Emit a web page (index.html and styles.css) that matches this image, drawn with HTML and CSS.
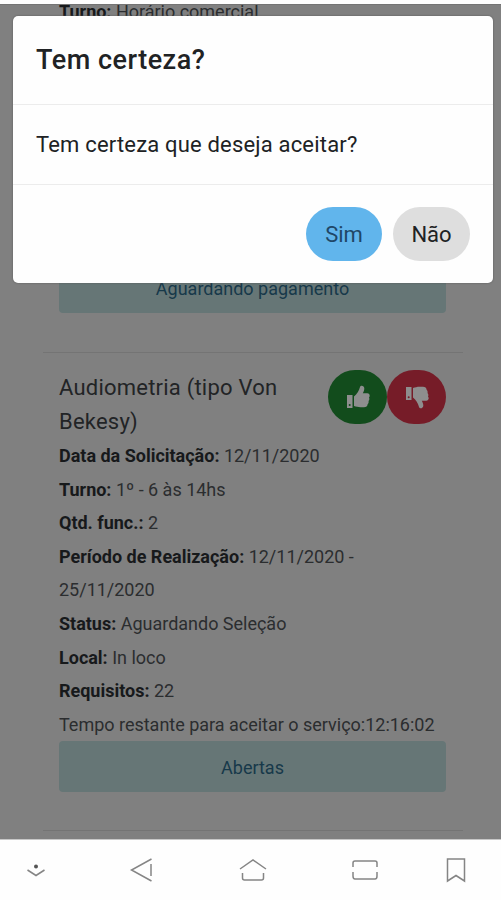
FILE: index.html
```html
<!DOCTYPE html>
<html lang="pt-BR">
<head>
<meta charset="utf-8">
<meta name="viewport" content="width=device-width, initial-scale=1">
<title>Solicitações</title>
<link rel="stylesheet" href="styles.css">
</head>
<body>
<div class="screen">
  <main class="page">
    <section class="request previous">
      <p><b>Turno:</b> <span>Horário comercial</span></p>
      <div class="alert">Aguardando pagamento</div>
    </section>
    <section class="request">
      <header class="request-head">
        <h2>Audiometria (tipo Von Bekesy)</h2>
        <div class="votes">
          <button class="vote accept" aria-label="Aceitar"><svg viewBox="0 0 24 24"><path d="M1 10h5.500v13H1zM8 11.500c3-2.500 5-5.500 6-9.500.6-2.300 4.500-1.700 4.300 1.700-.1 1.700-.8 3.200-1.500 4.600h4.500c2.500 0 3 2.700 1.700 4.200.7 1.300.3 2.600-.5 3.500.4 1.300 0 2.500-.9 3.200 0 2-1.500 3-3.600 3h-3.500c-2.400 0-4.400-.7-6.500-1.200z"/><circle class="dot" cx="3.700" cy="20" r="1"/></svg></button>
          <button class="vote reject" aria-label="Recusar"><svg viewBox="0 0 24 24"><path d="M1 2h5.500v13H1zM8 12.500c3 2.500 5 5.500 6 9.500.6 2.300 4.500 1.700 4.300-1.700-.1-1.700-.8-3.200-1.500-4.600h4.500c2.500 0 3-2.700 1.700-4.200.7-1.300.3-2.600-.5-3.500.4-1.300 0-2.500-.9-3.200 0-2-1.500-3-3.600-3h-3.500C12.100 1.800 10.100 2.500 8 3z"/><circle class="dot" cx="3.700" cy="12.200" r="1"/></svg></button>
        </div>
      </header>
      <p><b>Data da Solicitação:</b> 12/11/2020</p>
      <p><b>Turno:</b> 1º - 6 às 14hs</p>
      <p><b>Qtd. func.:</b> 2</p>
      <p class="period"><b>Período de Realização:</b> 12/11/2020 - 25/11/2020</p>
      <p><b>Status:</b> Aguardando Seleção</p>
      <p><b>Local:</b> In loco</p>
      <p><b>Requisitos:</b> 22</p>
      <p class="remaining">Tempo restante para aceitar o serviço:12:16:02</p>
      <div class="alert">Abertas</div>
    </section>
    <hr class="next-rule">
  </main>
  <div class="modal" role="dialog">
    <h1>Tem certeza?</h1>
    <div class="modal-body">Tem certeza que deseja aceitar?</div>
    <footer><button class="btn yes">Sim</button><button class="btn no">Não</button></footer>
  </div>
</div>
<nav class="system-nav">
  <svg class="n1" viewBox="0 0 20 14"><circle class="solid" cx="10" cy="3.500" r="2"/><path d="M1.500 7 10 12.500 18.500 7"/></svg>
  <svg class="n2" viewBox="0 0 24 26"><path d="M22.500 2 2.500 13l20 11M22 7v12"/></svg>
  <svg class="n3" viewBox="0 0 28 26"><path d="M1 12 14 3l13 9M3.500 16v5q0 2 2 2h17q2 0 2-2v-5"/></svg>
  <svg class="n4" viewBox="0 0 28 24"><path d="M2 9V5q0-2 2-2h20q2 0 2 2v4M2 14v4q0 3 2 3h20q2 0 2-3v-4"/></svg>
  <svg class="n5" viewBox="0 0 20 26"><path d="M1.500 2h17v22L10 18.500 1.500 24z"/></svg>
</nav>
</body>
</html>
```
FILE: styles.css
```css
* { box-sizing: border-box; }

body {
  margin: 0;
  height: 900px;
  overflow: hidden;
  background: #fefefe;
  font-family: Roboto, sans-serif;
  color: #2b2d2f;
}

.screen {
  position: relative;
  height: 835px;
  margin-top: 4px;
  overflow: hidden;
  background: #808080;
  border-top: 1px solid #747474;
}

.page {
  padding: 0 38px 0 43px;
}

.request {
  height: 478px;
  padding: 14px 17px 0 16px;
  border-top: 1px solid #747474;
}

.previous {
  display: flex;
  flex-direction: column;
  justify-content: space-between;
  height: 347px;
  padding: 0 17px 39px 16px;
  border: 0;
}

.previous p {
  margin-top: -10px;
}

p {
  margin: 0;
  font-size: 18px;
  line-height: 33.600px;
  letter-spacing: -0.010px;
}

b {
  font-weight: 700;
  color: #17191b;
}

.period {
  width: 330px;
}

.request-head {
  display: flex;
  justify-content: space-between;
  height: 72px;
}

h2 {
  width: 240px;
  margin: 4px 0 0;
  font-size: 22px;
  line-height: 34px;
  font-weight: 400;
  letter-spacing: 0.220px;
  color: #222426;
}

.votes {
  display: flex;
  margin-top: 3px;
}

button {
  border: 0;
  padding: 0;
  font: inherit;
}

.vote {
  display: flex;
  align-items: center;
  justify-content: center;
  width: 59px;
  height: 54px;
  border-radius: 27px;
}

.accept { background: #124c1c; }
.reject { background: #761c28; }

.vote svg {
  width: 24px;
  height: 24px;
  fill: #8e8e8e;
}

.accept .dot { fill: #124c1c; }
.reject .dot { fill: #761c28; }

.alert {
  height: 51px;
  border-radius: 4px;
  background: #667676;
  color: #17394a;
  font-size: 18px;
  line-height: 53px;
  text-align: center;
}

.next-rule {
  height: 1px;
  margin: 0;
  border: 0;
  background: #747474;
}

.modal {
  position: absolute;
  top: 11px;
  left: 13px;
  width: 480px;
  height: 267px;
  border-radius: 5px;
  background: #fefefe;
  box-shadow: 0 0 2px #555;
  color: #202224;
}

h1 {
  height: 89px;
  margin: 0;
  padding: 0 23px;
  border-bottom: 1px solid #ececec;
  font-size: 27px;
  line-height: 89px;
  font-weight: 500;
  letter-spacing: 0.500px;
}

.modal-body {
  height: 80px;
  padding: 0 23px;
  border-bottom: 1px solid #ececec;
  font-size: 22px;
  line-height: 80px;
  letter-spacing: 0.180px;
}

footer {
  display: flex;
  justify-content: flex-end;
  gap: 11px;
  padding: 22px 23px 0;
}

.btn {
  width: 76px;
  height: 54px;
  border-radius: 27px;
  font-size: 22px;
}

.yes { background: #61b5ec; color: #1f4767; }
.no { width: 77px; background: #dedede; color: #202224; }

.system-nav {
  display: grid;
  grid-template-columns: 71px 141px 82px 141px 42px;
  align-items: center;
  justify-items: center;
  height: 61px;
  border-top: 1px solid #c8c8c8;
}

.system-nav svg {
  fill: none;
  stroke: #858585;
  stroke-width: 1.500;
}

.system-nav .solid { fill: #555; stroke: none; }
.n1 { width: 20px; height: 14px; }
.system-nav .n2 { width: 24px; height: 26px; margin-right: 2px; }
.n3 { width: 28px; height: 26px; }
.n4 { width: 28px; height: 24px; }
.n5 { width: 20px; height: 26px; }
```
